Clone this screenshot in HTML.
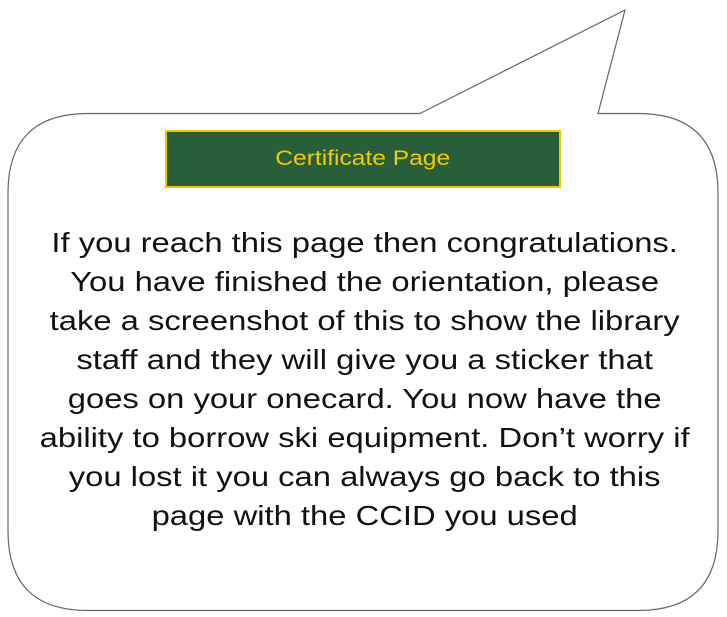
<!DOCTYPE html>
<html><head><meta charset="utf-8"><style>
html,body{margin:0;padding:0;background:#fff;width:727px;height:617px;overflow:hidden;position:relative;font-family:"Liberation Sans",Arial,sans-serif}
svg{position:absolute;left:0;top:0}
.btn{position:absolute;left:165px;top:130px;width:392px;height:54px;background:#295e3a;border:2px solid #f0c800;color:#f2cc00;font-size:21px;display:flex;align-items:center;justify-content:center}
.btn span{display:inline-block;transform:scaleX(1.17)}
.txt{position:absolute;left:0;width:730px;top:223px;text-align:center;font-size:28px;line-height:39px;color:#111;transform:scaleX(1.17);transform-origin:367px 0}
</style></head><body>
<svg width="727" height="617"><path d="M420,113.5 L625,10 L598,113.5 L638,113.5 Q718,113.5 718,193 L718,531 Q718,610.5 638,610.5 L88,610.5 Q8,610.5 8,531 L8,193 Q8,113.5 88,113.5 Z" fill="#fff" stroke="#666" stroke-width="1.2"/></svg>
<div class="btn"><span>Certificate Page</span></div>
<div class="txt">If you reach this page then congratulations.<br>You have finished the orientation, please<br>take a screenshot of this to show the library<br>staff and they will give you a sticker that<br>goes on your onecard. You now have the<br>ability to borrow ski equipment. Don’t worry if<br>you lost it you can always go back to this<br>page with the CCID you used</div>
</body></html>
